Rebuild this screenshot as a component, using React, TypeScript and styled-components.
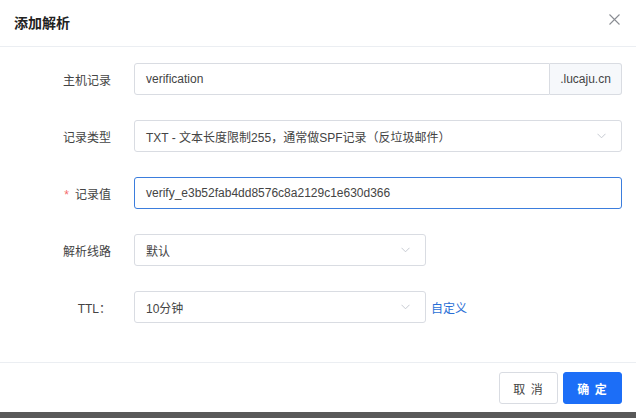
import React from 'react';
import styled, { createGlobalStyle } from 'styled-components';

const GlobalStyle = createGlobalStyle`
    html, body {
        margin: 0;
        padding: 0;
        background: #ffffff;
    }
    body {
        font-family: 'Liberation Sans', 'Noto Sans CJK SC', sans-serif;
        font-size: 12px;
        color: #333333;
    }
`;

const Chevron: React.FC = () => (
    <ChevronIcon width="9" height="6" viewBox="0 0 9 6">
        <polyline points="0.5,0.8 4.5,4.8 8.5,0.8" fill="none" stroke="#c0c4cc" strokeWidth="0.9" />
    </ChevronIcon>
);

const CloseIcon: React.FC = () => (
    <svg width="11" height="11" viewBox="0 0 11 11">
        <path d="M0.5 0.5 L10.5 10.5 M10.5 0.5 L0.5 10.5" stroke="#8a8d93" strokeWidth="1.1" fill="none" />
    </svg>
);

const App: React.FC = () => {
    return (
        <>
            <GlobalStyle />
            <Dialog>
                <Header>
                    <Title>添加解析</Title>
                    <CloseButton>
                        <CloseIcon />
                    </CloseButton>
                </Header>
                <Body>
                    <FormRow>
                        <Label>主机记录</Label>
                        <InputGroup>
                            <Field grouped>verification</Field>
                            <Addon>.lucaju.cn</Addon>
                        </InputGroup>
                    </FormRow>
                    <FormRow>
                        <Label>记录类型</Label>
                        <Select>
                            <span>TXT - 文本长度限制255，通常做SPF记录（反垃圾邮件）</span>
                            <Chevron />
                        </Select>
                    </FormRow>
                    <FormRow>
                        <Label>
                            <Required>*</Required>记录值
                        </Label>
                        <Field focused>verify_e3b52fab4dd8576c8a2129c1e630d366</Field>
                    </FormRow>
                    <FormRow>
                        <Label>解析线路</Label>
                        <Select width={292}>
                            <span>默认</span>
                            <Chevron />
                        </Select>
                    </FormRow>
                    <FormRow>
                        <Label>TTL：</Label>
                        <Select width={292}>
                            <span>10分钟</span>
                            <Chevron />
                        </Select>
                        <Link>自定义</Link>
                    </FormRow>
                </Body>
                <Footer>
                    <Button>取 消</Button>
                    <Button primary>确 定</Button>
                </Footer>
            </Dialog>
            <Backdrop />
        </>
    );
};

const Dialog = styled.div`
    width: 636px;
    background: #ffffff;
`;

const Header = styled.div`
    display: flex;
    align-items: center;
    justify-content: space-between;
    padding: 0 16px 0 14px;
    border-bottom: 1px solid #ebeef2;
    box-sizing: border-box;
    height: 47px;
`;

const Title = styled.div`
    font-size: 14px;
    font-weight: bold;
    color: #222222;
    margin-top: -2px;
`;

const CloseButton = styled.div`
    display: flex;
    align-items: center;
    margin-top: -8px;
`;

const Body = styled.div`
    padding: 16px 14px 39px 0;
    display: flex;
    flex-direction: column;
    gap: 25px;
`;

const FormRow = styled.div`
    display: flex;
    align-items: center;
    height: 32px;
`;

const Label = styled.div`
    width: 111px;
    padding-right: 23px;
    flex-shrink: 0;
    text-align: right;
    font-size: 12px;
    color: #444444;
`;

const Required = styled.span`
    color: #f56c6c;
    margin-right: 6px;
`;

const InputGroup = styled.div`
    flex: 1;
    display: flex;
    height: 32px;
`;

const Field = styled.div<{ grouped?: boolean; focused?: boolean }>`
    flex: 1;
    height: 32px;
    box-sizing: border-box;
    display: flex;
    align-items: center;
    padding: 0 11px;
    font-size: 12px;
    color: #444444;
    border: 1px solid ${props => (props.focused ? '#3b7ddd' : '#d9dce2')};
    border-radius: ${props => (props.grouped ? '3px 0 0 3px' : '3px')};
`;

const Addon = styled.div`
    width: 72px;
    box-sizing: border-box;
    display: flex;
    align-items: center;
    justify-content: center;
    background: #f6f8fb;
    border: 1px solid #d9dce2;
    border-left: none;
    border-radius: 0 3px 3px 0;
    font-size: 12px;
    color: #444444;
`;

const Select = styled.div<{ width?: number }>`
    ${props => (props.width ? `width: ${props.width}px;` : 'flex: 1;')}
    height: 32px;
    box-sizing: border-box;
    display: flex;
    align-items: center;
    justify-content: space-between;
    padding: 0 15px 0 11px;
    border: 1px solid #d9dce2;
    border-radius: 3px;
    font-size: 12px;
    color: #444444;
`;

const ChevronIcon = styled.svg`
    flex-shrink: 0;
`;

const Link = styled.span`
    margin-left: 5px;
    font-size: 12px;
    color: #2a6fd6;
`;

const Footer = styled.div`
    border-top: 1px solid #ebeef2;
    display: flex;
    justify-content: flex-end;
    gap: 5px;
    padding: 9px 14px 8px;
`;

const Button = styled.div<{ primary?: boolean }>`
    width: 59px;
    height: 32px;
    box-sizing: border-box;
    display: flex;
    align-items: center;
    justify-content: center;
    border-radius: 3px;
    font-size: 12px;
    letter-spacing: 1px;
    border: 1px solid ${props => (props.primary ? '#1c6ef7' : '#d9dce2')};
    background: ${props => (props.primary ? '#1c6ef7' : '#ffffff')};
    color: ${props => (props.primary ? '#ffffff' : '#444444')};
    font-weight: ${props => (props.primary ? 'bold' : 'normal')};
`;

const Backdrop = styled.div`
    height: 6px;
    background: #595959;
`;

export default App;
